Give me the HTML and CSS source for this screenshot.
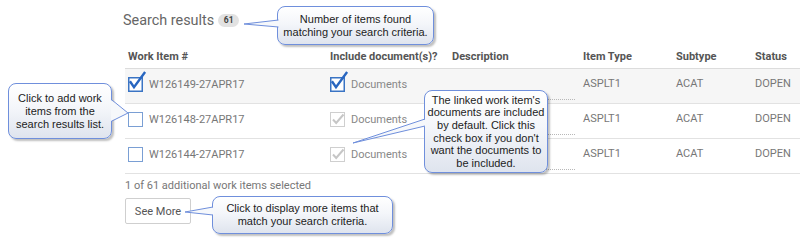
FILE: index.html
```html
<!DOCTYPE html>
<html>
<head>
    <title>Search results</title>
    <link rel="stylesheet" href="styles.css">
</head>
<body>
    <div class="page">
        <div class="results">
            <div class="results-title">Search results <span class="badge">61</span></div>

            <div class="grid head">
                <div class="cell">Work Item #</div>
                <div class="cell">Include document(s)?</div>
                <div class="cell">Description</div>
                <div class="cell">Item Type</div>
                <div class="cell">Subtype</div>
                <div class="cell">Status</div>
            </div>

            <div class="grid row row-alt">
                <div class="cell">
                    <svg class="cb cb-on" width="15" height="15" viewBox="0 0 15 15"><rect x="0.75" y="0.75" width="13.5" height="13.5"/><path d="M2.6 5.2 L6 10.2 L16.4 -4"/></svg>
                    <span>W126149-27APR17</span>
                </div>
                <div class="cell">
                    <svg class="cb cb-on" width="15" height="15" viewBox="0 0 15 15"><rect x="0.75" y="0.75" width="13.5" height="13.5"/><path d="M2.6 5.2 L6 10.2 L16.4 -4"/></svg>
                    <span class="docs">Documents</span>
                </div>
                <div class="cell desc"><div class="desc-line"></div></div>
                <div class="cell top">ASPLT1</div>
                <div class="cell top">ACAT</div>
                <div class="cell top">DOPEN</div>
            </div>

            <div class="grid row">
                <div class="cell">
                    <svg class="cb cb-off" width="15" height="15" viewBox="0 0 15 15"><rect x="0.5" y="0.5" width="14" height="14"/></svg>
                    <span>W126148-27APR17</span>
                </div>
                <div class="cell">
                    <svg class="cb cb-dis" width="15" height="15" viewBox="0 0 15 15"><rect x="0.5" y="0.5" width="14" height="14"/><path d="M3 7.5 L6.2 11 L13.5 2.5"/></svg>
                    <span class="docs">Documents</span>
                </div>
                <div class="cell desc"><div class="desc-line"></div></div>
                <div class="cell top">ASPLT1</div>
                <div class="cell top">ACAT</div>
                <div class="cell top">DOPEN</div>
            </div>

            <div class="grid row">
                <div class="cell">
                    <svg class="cb cb-off" width="15" height="15" viewBox="0 0 15 15"><rect x="0.5" y="0.5" width="14" height="14"/></svg>
                    <span>W126144-27APR17</span>
                </div>
                <div class="cell">
                    <svg class="cb cb-dis" width="15" height="15" viewBox="0 0 15 15"><rect x="0.5" y="0.5" width="14" height="14"/><path d="M3 7.5 L6.2 11 L13.5 2.5"/></svg>
                    <span class="docs">Documents</span>
                </div>
                <div class="cell desc"><div class="desc-line"></div></div>
                <div class="cell top">ASPLT1</div>
                <div class="cell top">ACAT</div>
                <div class="cell top">DOPEN</div>
            </div>

            <div class="selected-count">1 of 61 additional work items selected</div>
            <button type="button" class="btn-more">See More</button>
        </div>

        <!-- callouts laid over the screen -->
        <div class="callout callout-count">Number of items found<br>matching your search criteria.</div>
        <div class="callout callout-add">Click to add work<br>items from the<br>search results list.</div>
        <div class="callout callout-docs">The linked work item's<br>documents are included<br>by default. Click this<br>check box if you don't<br>want the documents to<br>be included.</div>
        <div class="callout callout-more">Click to display more items that<br>match your search criteria.</div>

        <svg class="pointers" width="800" height="244" viewBox="0 0 800 244">
            <polygon class="ptr-fill" points="279,20 244,24 279,27"/>
            <polyline class="ptr-line" points="278.5,20 244,24 278.5,27"/>

            <polygon class="ptr-fill" points="111,100 128,113 111,121"/>
            <polyline class="ptr-line" points="112,100 128,113 112,121"/>

            <polygon class="ptr-fill" points="426,119 353,143 426,126"/>
            <polyline class="ptr-line" points="425,119 353,143 425,126"/>

            <polygon class="ptr-fill" points="214,207 185,212 214,215"/>
            <polyline class="ptr-line" points="213,207 185,212 213,215"/>
        </svg>
    </div>
</body>
</html>
```

FILE: styles.css
```css
* {
    margin: 0;
    padding: 0;
    box-sizing: border-box;
}

body {
    background: #fff;
    font-family: Roboto, "Liberation Sans", Arial, sans-serif;
}

.page {
    position: relative;
    width: 800px;
    height: 244px;
    overflow: hidden;
}

.results {
    padding: 11px 0 0 125px;
}

.results-title {
    display: flex;
    align-items: center;
    gap: 4px;
    height: 18px;
    margin-left: -2px;
    font-size: 14.4px;
    color: #666;
}

.badge {
    display: inline-block;
    width: 21px;
    height: 13px;
    line-height: 13px;
    border-radius: 7px;
    background: #e2e2e2;
    color: #444;
    font-size: 8.5px;
    font-weight: 700;
    text-align: center;
}

.grid {
    display: grid;
    grid-template-columns: 202px 122px 131px 93px 79px 1fr;
}

.head {
    margin-top: 16px;
    height: 24px;
    border-bottom: 1px solid #dcdcdc;
    font-size: 11px;
    font-weight: 700;
    color: #555;
}

.head .cell {
    display: flex;
    align-items: center;
    padding-left: 3px;
    padding-bottom: 1px;
}

.row {
    height: 35px;
    border-bottom: 1px solid #e2e2e2;
    font-size: 11px;
    color: #777;
}

.row-alt {
    background: #f6f6f6;
}

.row .cell {
    display: flex;
    align-items: center;
    gap: 6px;
    padding-left: 3px;
    padding-bottom: 3px;
}

.row .cell.top {
    align-items: flex-start;
    padding-top: 8px;
}

.row .cell.desc {
    align-items: flex-end;
    padding-bottom: 3px;
}

.desc-line {
    width: 123px;
    border-bottom: 1px dotted #b8b8b8;
}

.docs {
    color: #888;
}

.cb {
    flex: none;
    overflow: visible;
    fill: #fff;
}

.cb-on rect {
    stroke: #3a74c4;
    stroke-width: 1.5;
}

.cb-on path {
    fill: none;
    stroke: #2866c0;
    stroke-width: 2.4;
    stroke-linecap: square;
}

.cb-off rect {
    stroke: #7a9fd4;
    stroke-width: 1;
}

.cb-dis rect {
    stroke: #cfcfcf;
    stroke-width: 1;
}

.cb-dis path {
    fill: none;
    stroke: #c6c6c6;
    stroke-width: 2;
}

.selected-count {
    margin-top: 4px;
    height: 16px;
    line-height: 16px;
    font-size: 11px;
    color: #777;
}

.btn-more {
    margin-top: 4px;
    width: 66px;
    height: 26px;
    background: #fff;
    border: 1px solid #cfcfcf;
    border-radius: 2px;
    font-family: Roboto, sans-serif;
    font-size: 11px;
    color: #555;
}

/* callouts */
.callout {
    position: absolute;
    display: flex;
    align-items: center;
    justify-content: center;
    text-align: center;
    font-family: "Liberation Sans", Arial, sans-serif;
    font-size: 11px;
    line-height: 13px;
    color: #1c1c1c;
    background: linear-gradient(#ffffff 0%, #f4f6fa 45%, #dfe4ee 100%);
    border: 1px solid #6f8fdc;
    border-radius: 8px;
    box-shadow: 2px 2px 2px rgba(0, 0, 0, 0.25);
}

.callout-count {
    left: 277px;
    top: 6px;
    width: 157px;
    height: 39px;
}

.callout-add {
    left: 8px;
    top: 83px;
    width: 104px;
    height: 56px;
}

.callout-docs {
    left: 424px;
    top: 90px;
    width: 124px;
    height: 83px;
    line-height: 12.6px;
}

.callout-more {
    left: 212px;
    top: 196px;
    width: 181px;
    height: 38px;
}

.pointers {
    position: absolute;
    left: 0;
    top: 0;
    pointer-events: none;
}

.ptr-fill {
    fill: #f6f8fb;
}

.ptr-line {
    fill: none;
    stroke: #6f8fdc;
    stroke-width: 1;
}
```
